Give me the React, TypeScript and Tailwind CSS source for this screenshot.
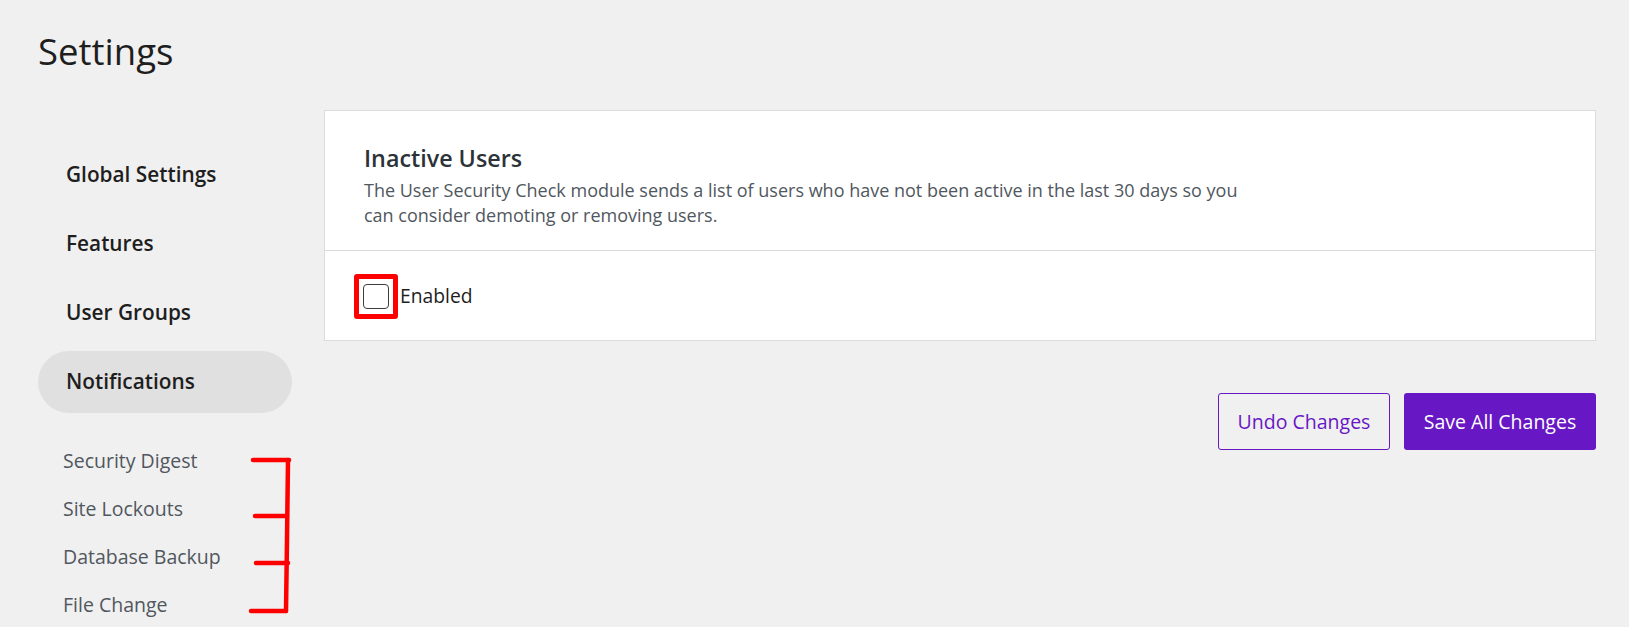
import React from "react";

const navItems = ["Global Settings", "Features", "User Groups", "Notifications"];
const subItems = ["Security Digest", "Site Lockouts", "Database Backup", "File Change"];

export default function App() {
  return (
    <div className="relative h-screen overflow-hidden bg-[#f0f0f0] font-['Open_Sans','Noto_Sans',sans-serif] text-[#1e1e1e]">
      <header className="pl-[38px] pt-[33px]">
        <h1 className="text-[36.5px] leading-[37px] font-normal text-[#1e1e1e]">Settings</h1>
      </header>

      <div className="mt-[40px] flex pl-[38px] pr-[33px]">
        <aside className="w-[254px] shrink-0 pt-[34px]">
          <nav className="flex flex-col gap-[7px]">
            {navItems.map((item) => (
              <div
                key={item}
                className={`flex h-[62px] items-center rounded-full pl-[28px] text-[20.8px] font-semibold text-[#1e1e1e] ${
                  item === "Notifications" ? "bg-[#e0e0e0]" : ""
                }`}
              >
                {item}
              </div>
            ))}
          </nav>
          <ul className="mt-[24px] flex flex-col">
            {subItems.map((item) => (
              <li key={item} className="pl-[25px] text-[19.5px] leading-[48px] text-[#50575e]">
                {item}
              </li>
            ))}
          </ul>
        </aside>

        <main className="ml-[32px] flex-1">
          <section className="border border-[#dcdcdc] bg-white">
            <div className="pl-[39px] pr-[40px] pt-[32px] pb-[22px]">
              <h2 className="text-[23.3px] leading-[30px] font-semibold text-[#2c3338]">Inactive Users</h2>
              <p className="mt-[5px] max-w-[905px] text-[18px] leading-[25px] text-[#50575e]">
                The User Security Check module sends a list of users who have not been active in the last 30 days so you can consider demoting or removing users.
              </p>
            </div>
            <div className="flex h-[90px] items-center border-t border-[#dcdcdc] pl-[29px] pt-[2px]">
              <span className="flex h-[45px] w-[44px] items-center justify-center rounded-[3px] border-[5px] border-[#ff0000]">
                <span className="block h-[25px] w-[26px] rounded-[4px] border-[1.5px] border-[#3c3c3c] bg-white" />
              </span>
              <span className="ml-[2px] text-[19.3px] text-[#1e1e1e]">Enabled</span>
            </div>
          </section>

          <div className="mt-[52px] flex justify-end gap-[14px]">
            <button className="flex h-[57px] w-[172px] items-center justify-center rounded-[3px] border-[1.5px] border-[#6817c5] bg-transparent text-[19.5px] text-[#6817c5]">
              Undo Changes
            </button>
            <button className="flex h-[57px] w-[192px] items-center justify-center rounded-[3px] bg-[#6817c5] text-[19.5px] text-white">
              Save All Changes
            </button>
          </div>
        </main>
      </div>

      <svg
        className="pointer-events-none absolute left-0 top-0"
        width="1629"
        height="627"
        viewBox="0 0 1629 627"
        fill="none"
      >
        <g stroke="#ff0000" strokeWidth="4.5" strokeLinecap="round" strokeLinejoin="round">
          <path d="M253 460 L289 460" />
          <path d="M255 516 L287 516" />
          <path d="M256 563 L288 563" />
          <path d="M251 611 L286 611" />
          <path d="M288 460 L287 540 L286 611" />
        </g>
      </svg>
    </div>
  );
}
